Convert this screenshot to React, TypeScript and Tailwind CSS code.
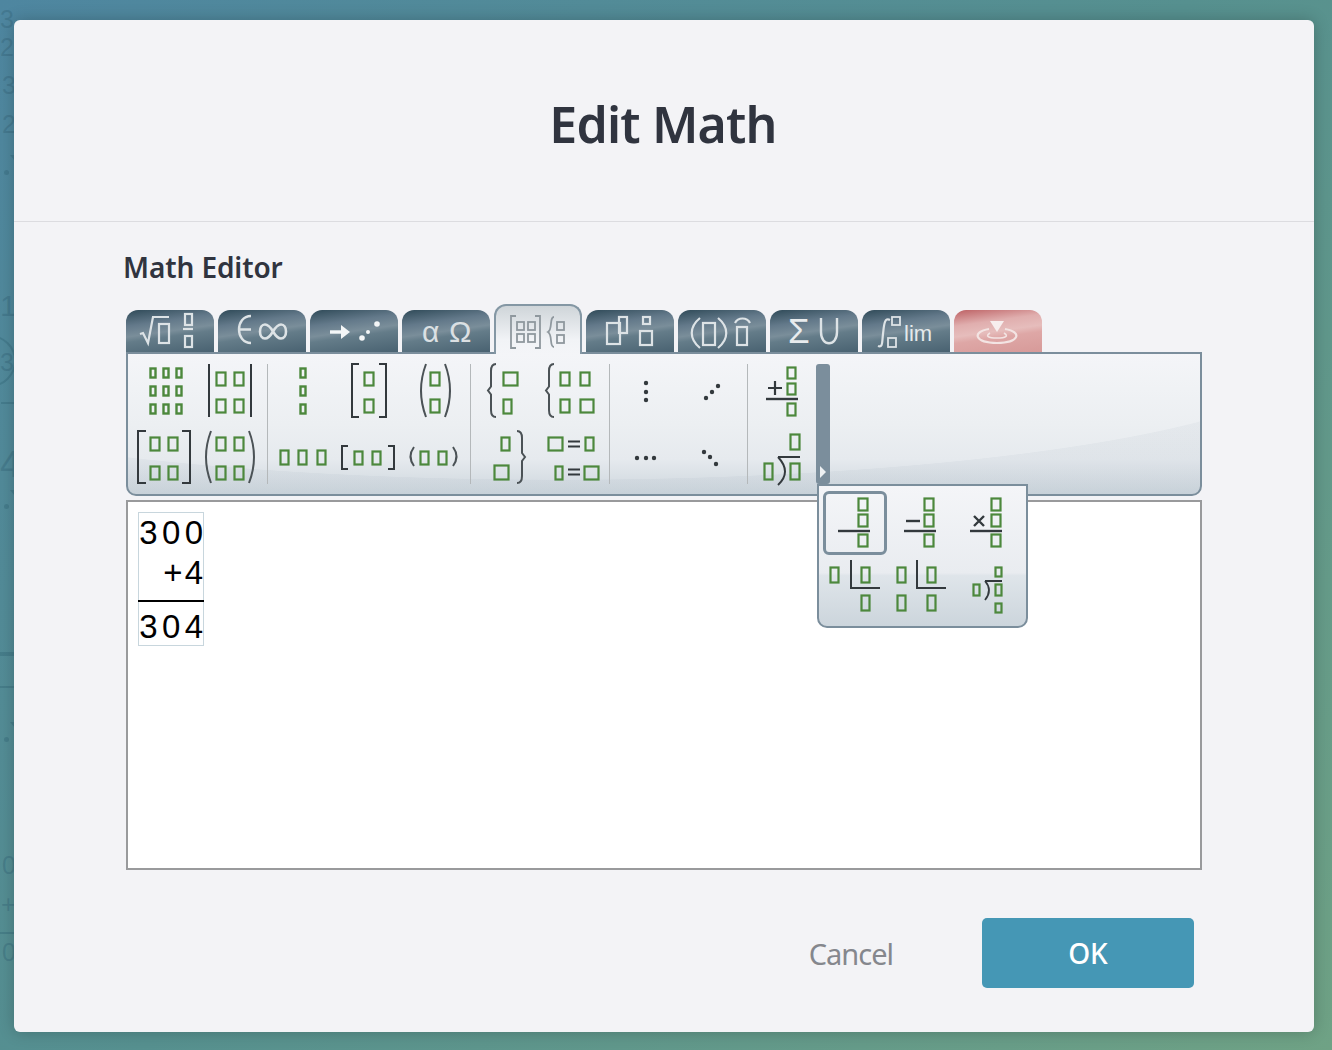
// App.tsx
import React from "react";

const GREEN = "#4c883c";
const DARK = "#33393d";

const B = ({ x, y, w, h, sw = 2.2 }: { x: number; y: number; w: number; h: number; sw?: number }) => (
  <rect x={x + 0.5} y={y + 0.5} width={w - 1} height={h - 1} fill="none" stroke={GREEN} strokeWidth={sw} />
);

const L = ({ d, sw = 2, c = DARK }: { d: string; sw?: number; c?: string }) => (
  <path d={d} fill="none" stroke={c} strokeWidth={sw} />
);

const Dots = ({ pts }: { pts: number[][] }) => (
  <>
    {pts.map((p, i) => (
      <circle key={i} cx={p[0]} cy={p[1]} r={2.2} fill={DARK} />
    ))}
  </>
);

// every cell is drawn in page coordinates through its viewBox
const Cell = ({ x, y, w = 68, children }: { x: number; y: number; w?: number; children: React.ReactNode }) => (
  <svg width={w} height="60" viewBox={`${x} ${y} ${w} 60`} className="block overflow-visible">
    {children}
  </svg>
);

const Sep = () => <div className="w-[1px] h-[120px] bg-[#b4b8ba]" />;

const Bracket = ({ l, r, t, b, s = 8 }: { l: number; r: number; t: number; b: number; s?: number }) => (
  <L d={`M${l + s} ${t}H${l}V${b}H${l + s}M${r - s} ${t}H${r}V${b}H${r - s}`} />
);

const Paren = ({ l, r, t, b, w = 8 }: { l: number; r: number; t: number; b: number; w?: number }) => (
  <L
    sw={2}
    c="#4b5256"
    d={`M${l + w} ${t}Q${l - 2} ${(t + b) / 2} ${l + w} ${b}M${r - w} ${t}Q${r + 2} ${(t + b) / 2} ${r - w} ${b}`}
  />
);

const BraceL = ({ x, t, b }: { x: number; t: number; b: number }) => {
  const m = (t + b) / 2;
  return <L sw={2} c="#4b5256" d={`M${x + 8} ${t}Q${x + 3} ${t} ${x + 3} ${t + 7}V${m - 4}L${x} ${m}L${x + 3} ${m + 4}V${b - 7}Q${x + 3} ${b} ${x + 8} ${b}`} />;
};

const BraceR = ({ x, t, b }: { x: number; t: number; b: number }) => {
  const m = (t + b) / 2;
  return <L sw={2} c="#4b5256" d={`M${x} ${t}Q${x + 5} ${t} ${x + 5} ${t + 7}V${m - 4}L${x + 8} ${m}L${x + 5} ${m + 4}V${b - 7}Q${x + 5} ${b} ${x} ${b}`} />;
};

const Eq = ({ x, y }: { x: number; y: number }) => <L sw={2.2} d={`M${x} ${y - 2.5}H${x + 12}M${x} ${y + 2.5}H${x + 12}`} />;

const TabIcon = ({ children, c }: { children: React.ReactNode; c: string }) => (
  <svg width="88" height="42" viewBox="0 0 88 42" fill="none" stroke={c} strokeWidth="2.2" className="block">
    {children}
  </svg>
);

const tabText = "font-['Liberation_Sans',sans-serif]";

const TAB_ICONS: React.ReactNode[] = [
  <>
    <path d="M14 24l3-1 5 10 5-26h16" />
    <rect x="33" y="14" width="10" height="19" />
    <rect x="59" y="4" width="7" height="11" />
    <path d="M57 19h10" />
    <rect x="59" y="26" width="7" height="11" />
  </>,
  <>
    <path d="M33 6C17 6 17 33 33 33M22 19.5h11" strokeWidth="2.4" />
    <path d="M55 21.5c-3-5-6-7-8-7-3 0-5 3-5 7s2 7 5 7c2 0 5-2 8-7s6-7 8-7c3 0 5 3 5 7s-2 7-5 7c-2 0-5-2-8-7z" strokeWidth="2.6" />
  </>,
  <>
    <path d="M20 22h13" strokeWidth="3.4" stroke="#f4f6f7" />
    <path d="M31 15l9 7-9 7z" fill="#f4f6f7" stroke="none" />
    <circle cx="52" cy="28" r="2.8" fill="#f4f6f7" stroke="none" />
    <circle cx="58" cy="22" r="2" fill="#f4f6f7" stroke="none" />
    <circle cx="67" cy="14" r="2.8" fill="#f4f6f7" stroke="none" />
  </>,
  <>
    <text x="20" y="32" fontSize="30" fill="#dbe0e3" stroke="none" className={tabText}>α</text>
    <text x="47" y="32" fontSize="30" fill="#dbe0e3" stroke="none" className={tabText}>Ω</text>
  </>,
  <>
    <path d="M22 6h-5v32h5M41 6h5v32h-5" strokeWidth="1.8" />
    <rect x="23" y="12" width="7" height="8" strokeWidth="1.8" />
    <rect x="34" y="12" width="7" height="8" strokeWidth="1.8" />
    <rect x="23" y="24" width="7" height="8" strokeWidth="1.8" />
    <rect x="34" y="24" width="7" height="8" strokeWidth="1.8" />
    <path d="M60 7c-5 0-1 12-6 15 5 3 1 15 6 15" strokeWidth="1.8" />
    <rect x="63" y="12" width="7" height="8" strokeWidth="1.8" />
    <rect x="63" y="25" width="7" height="8" strokeWidth="1.8" />
  </>,
  <>
    <rect x="21" y="13" width="13" height="21" />
    <rect x="33" y="7" width="8" height="16" />
    <rect x="57" y="7" width="7" height="7" />
    <rect x="54" y="21" width="12" height="14" />
  </>,
  <>
    <path d="M22 8c-11 9-11 21 0 30M40 8c11 9 11 21 0 30" />
    <rect x="25" y="13" width="12" height="22" />
    <path d="M57 13c3-6 12-6 15 0" />
    <rect x="59" y="17" width="10" height="18" />
  </>,
  <>
    <text x="18" y="33" fontSize="35" fill="#e8ecee" stroke="none" className={tabText}>Σ</text>
    <path d="M51 8v14c0 15 16 15 16 0V8" strokeWidth="2.4" />
  </>,
  <>
    <path d="M16 36c5 2 4-4 5-12s1-17 7-14" />
    <rect x="30" y="7" width="8" height="8" strokeWidth="1.8" />
    <rect x="26" y="28" width="8" height="9" strokeWidth="1.8" />
    <text x="42" y="31" fontSize="22" fill="#e4e9eb" stroke="none" className={tabText}>lim</text>
  </>,
  <>
    <path d="M36 11h14l-7 11z" fill="#f7eeee" stroke="none" />
    <path d="M35 19c-18 3-14 14 8 14s26-11 8-14" />
    <path d="M36 23c-5 3-2 5 7 5s12-2 7-5" strokeWidth="1.6" />
  </>,
];

const App: React.FC = () => {
  return (
    <div className="relative w-[1332px] h-[1050px] overflow-hidden pt-[20px] pl-[14px] bg-[linear-gradient(135deg,#4e86a0_0%,#56908f_50%,#6fa285_100%)] font-['Noto_Sans',sans-serif]">
      {/* faint page behind the overlay */}
      <div className="absolute left-0 top-0 w-[40px] h-[1050px] font-['Liberation_Sans',sans-serif] text-[#2f6074]/35 text-[25px] leading-none">
        <span className="absolute left-[0px] top-[7px]">3</span>
        <span className="absolute left-[0px] top-[35px]">2</span>
        <span className="absolute left-[2px] top-[73px]">3</span>
        <span className="absolute left-[2px] top-[112px]">2</span>
        <span className="absolute left-[10px] top-[155px] w-0 h-0 border-l-[5px] border-r-[5px] border-t-[6px] border-l-transparent border-r-transparent border-t-[#2f6074]/35" />
        <span className="absolute left-[4px] top-[170px] w-[5px] h-[5px] rounded-full bg-[#2f6074]/35" />
        <span className="absolute left-[0px] top-[291px] text-[30px]">1</span>
        <span className="absolute left-[-36px] top-[335px] w-[52px] h-[52px] rounded-full border-2 border-[#2f6074]/35" />
        <span className="absolute left-[0px] top-[350px]">3</span>
        <span className="absolute left-[1px] top-[402px] w-[13px] h-[2px] bg-[#2f6074]/35" />
        <span className="absolute left-[0px] top-[447px] text-[36px]">4</span>
        <span className="absolute left-[10px] top-[490px] w-0 h-0 border-l-[5px] border-r-[5px] border-t-[6px] border-l-transparent border-r-transparent border-t-[#2f6074]/35" />
        <span className="absolute left-[4px] top-[504px] w-[5px] h-[5px] rounded-full bg-[#2f6074]/35" />
        <span className="absolute left-0 top-[652px] w-[14px] h-[4px] bg-[#2f6074]/35" />
        <span className="absolute left-0 top-[686px] w-[14px] h-[2px] bg-[#2f6074]/35" />
        <span className="absolute left-[10px] top-[722px] w-0 h-0 border-l-[5px] border-r-[5px] border-t-[6px] border-l-transparent border-r-transparent border-t-[#2f6074]/35" />
        <span className="absolute left-[4px] top-[737px] w-[5px] h-[5px] rounded-full bg-[#2f6074]/35" />
        <span className="absolute left-[2px] top-[853px]">0</span>
        <span className="absolute left-[1px] top-[892px]">+</span>
        <span className="absolute left-0 top-[932px] w-[14px] h-[2px] bg-[#2f6074]/35" />
        <span className="absolute left-[2px] top-[940px]">0</span>
      </div>

      <div className="relative w-[1300px] h-[1012px] rounded-[6px] bg-[#f3f3f6] shadow-[0_0_16px_rgba(0,0,0,0.22)]">
        <div className="h-[202px] pt-[6px] flex items-center justify-center border-b border-[#dcdce0]">
          <h1 className="-ml-[2px] text-[50px] tracking-[-0.8px] leading-none font-semibold text-[#30343f]">Edit Math</h1>
        </div>

        <div className="pl-[110px] pt-[29px]">
          <div className="-ml-[1px] text-[28px] tracking-[-0.1px] leading-[32px] font-semibold text-[#30343f]">Math Editor</div>

          <div className="ml-[2px] mt-[21px] w-[1076px]">
            {/* tabs */}
            <div className="flex items-end gap-[4px] h-[48px]">
              {TAB_ICONS.map((icon, i) =>
                i === 4 ? (
                  <div
                    key={i}
                    className="relative z-10 w-[88px] h-[50px] -mb-[2px] pt-[4px] rounded-t-[12px] border-2 border-b-0 border-[#8497a4] bg-[linear-gradient(180deg,#cfd5d9_0%,#f1f3f6_70%,#f4f5f8_100%)]"
                  >
                    <div className="-ml-[2px]">
                      <TabIcon c="#8f989e">{icon}</TabIcon>
                    </div>
                  </div>
                ) : (
                  <div
                    key={i}
                    className={
                      i === 9
                        ? "w-[88px] h-[42px] rounded-t-[12px] bg-[linear-gradient(172deg,#bd6164_0%,#e0aeae_30%,#e6bdbc_50%,#dea7a6_62%,#d79a99_100%)]"
                        : "w-[88px] h-[42px] rounded-t-[12px] bg-[linear-gradient(172deg,#2f4a58_0%,#63798a_30%,#7a8e9a_50%,#647c89_60%,#496271_100%)]"
                    }
                  >
                    <TabIcon c={i === 9 ? "#f3e4e3" : "#dde3e6"}>{icon}</TabIcon>
                  </div>
                )
              )}
            </div>

            {/* tool panel */}
            <div className="relative h-[144px] rounded-b-[10px] border-2 border-[#7b8e9c] pt-[10px] pl-[2px] bg-[radial-gradient(760px_126px_at_432px_0px,transparent_99.6%,rgba(110,130,150,0.06)_100%),linear-gradient(180deg,#f4f5f8_0%,#eceff2_50%,#e6eaee_75%,#cdd6dd_100%)]">
              <div className="flex">
                <div className="grid grid-cols-[68px_68px] w-[137px]">
                  <Cell x={130} y={364}>
                    {[368, 386, 404].map((y) =>
                      [150, 163, 176].map((x) => <B key={x + "" + y} x={x} y={y} w={6} h={10} sw={2.4} />)
                    )}
                  </Cell>
                  <Cell x={198} y={364}>
                    <L d="M209 364V417M251 364V417" />
                    <B x={216} y={372} w={10} h={14} />
                    <B x={234} y={372} w={10} h={14} />
                    <B x={216} y={399} w={10} h={14} />
                    <B x={234} y={399} w={10} h={14} />
                  </Cell>
                  <Cell x={130} y={424}>
                    <Bracket l={138} r={190} t={431} b={483} />
                    <B x={150} y={437} w={10} h={14} />
                    <B x={168} y={437} w={10} h={14} />
                    <B x={150} y={466} w={10} h={14} />
                    <B x={168} y={466} w={10} h={14} />
                  </Cell>
                  <Cell x={198} y={424}>
                    <Paren l={203} r={257} t={431} b={483} />
                    <B x={216} y={437} w={10} h={14} />
                    <B x={234} y={437} w={10} h={14} />
                    <B x={216} y={466} w={10} h={14} />
                    <B x={234} y={466} w={10} h={14} />
                  </Cell>
                </div>
                <Sep />
                <div className="grid grid-cols-[68px_67px_67px] w-[202px]">
                  <Cell x={268} y={364}>
                    {[368, 386, 404].map((y) => (
                      <B key={y} x={300} y={y} w={6} h={10} sw={2.4} />
                    ))}
                  </Cell>
                  <Cell x={336} y={364} w={67}>
                    <Bracket l={352} r={386} t={364} b={417} s={7} />
                    <B x={364} y={372} w={10} h={14} />
                    <B x={364} y={399} w={10} h={14} />
                  </Cell>
                  <Cell x={403} y={364} w={67}>
                    <Paren l={418} r={453} t={364} b={417} />
                    <B x={430} y={372} w={10} h={14} />
                    <B x={430} y={399} w={10} h={14} />
                  </Cell>
                  <Cell x={268} y={424}>
                    <B x={280} y={450} w={9} h={15} />
                    <B x={298} y={450} w={9} h={15} />
                    <B x={317} y={450} w={9} h={15} />
                  </Cell>
                  <Cell x={336} y={424} w={67}>
                    <Bracket l={342} r={394} t={446} b={469} s={6} />
                    <B x={354} y={451} w={9} h={14} />
                    <B x={372} y={451} w={9} h={14} />
                  </Cell>
                  <Cell x={403} y={424} w={67}>
                    <Paren l={409} r={458} t={447} b={466} w={5} />
                    <B x={420} y={451} w={9} h={14} />
                    <B x={438} y={451} w={9} h={14} />
                  </Cell>
                </div>
                <Sep />
                <div className="grid grid-cols-[68px_68px] w-[138px]">
                  <Cell x={471} y={364}>
                    <BraceL x={488} t={364} b={417} />
                    <B x={503} y={372} w={15} h={14} />
                    <B x={503} y={399} w={9} h={15} />
                  </Cell>
                  <Cell x={539} y={364}>
                    <BraceL x={546} t={364} b={417} />
                    <B x={560} y={372} w={10} h={14} />
                    <B x={580} y={372} w={10} h={14} />
                    <B x={560} y={399} w={10} h={14} />
                    <B x={580} y={399} w={14} h={14} />
                  </Cell>
                  <Cell x={471} y={424}>
                    <B x={501} y={437} w={9} h={14} />
                    <B x={494} y={465} w={15} h={15} />
                    <BraceR x={517} t={431} b={483} />
                  </Cell>
                  <Cell x={539} y={424}>
                    <B x={548} y={437} w={15} h={14} />
                    <Eq x={568} y={444} />
                    <B x={585} y={437} w={9} h={14} />
                    <B x={555} y={466} w={8} h={14} />
                    <Eq x={568} y={472} />
                    <B x={584} y={466} w={15} h={14} />
                  </Cell>
                </div>
                <Sep />
                <div className="grid grid-cols-[68px_68px] w-[137px]">
                  <Cell x={610} y={364}>
                    <Dots pts={[[646, 383], [646, 392], [646, 400]]} />
                  </Cell>
                  <Cell x={678} y={364}>
                    <Dots pts={[[706, 398], [712, 392], [718, 386]]} />
                  </Cell>
                  <Cell x={610} y={424}>
                    <Dots pts={[[637, 458], [646, 458], [654, 458]]} />
                  </Cell>
                  <Cell x={678} y={424}>
                    <Dots pts={[[704, 452], [710, 457], [716, 464]]} />
                  </Cell>
                </div>
                <Sep />
                <div className="w-[68px]">
                  <Cell x={748} y={364}>
                    <B x={787} y={367} w={9} h={12} />
                    <B x={787} y={383} w={9} h={12} />
                    <B x={787} y={403} w={9} h={13} />
                    <L d="M766 399H798" sw={2.4} />
                    <L d="M768 388H782M775 381V395" sw={2.2} />
                  </Cell>
                  <Cell x={748} y={424}>
                    <B x={790} y={434} w={10} h={16} />
                    <B x={764} y={463} w={9} h={17} />
                    <B x={790} y={463} w={10} h={17} />
                    <L d="M778 457H800M778 457Q792 472 778 485" />
                  </Cell>
                </div>
                {/* scroll handle */}
                <div className="relative w-[14px] h-[120px] rounded-[3px] bg-[#7b8e9c]">
                  <svg width="8" height="14" viewBox="0 0 8 14" className="absolute left-[3px] bottom-[5px]">
                    <path d="M1 1l6 6-6 6z" fill="#eef1f3" />
                  </svg>
                </div>
              </div>

              {/* overflow menu */}
              <div className="absolute left-[689px] top-[130px] z-20 w-[211px] h-[144px] rounded-b-[10px] border-2 border-[#7b8e9c] bg-[linear-gradient(180deg,#f4f5f8_0%,#e9ecf0_62%,#dfe5ea_64%,#ccd5dc_100%)]">
                <div className="grid grid-cols-[68px_66px_66px] pt-[5px] pl-[2px]">
                  <Menu x={821} y={491} selected>
                    <B x={858} y={498} w={10} h={13} />
                    <B x={858} y={514} w={10} h={13} />
                    <B x={858} y={534} w={10} h={13} />
                    <L d="M838 531H870" sw={2.4} />
                  </Menu>
                  <Menu x={889} y={491}>
                    <B x={924} y={498} w={10} h={13} />
                    <B x={924} y={514} w={10} h={13} />
                    <B x={924} y={534} w={10} h={13} />
                    <L d="M906 521H920" sw={2.4} />
                    <L d="M904 531H936" sw={2.4} />
                  </Menu>
                  <Menu x={955} y={491}>
                    <B x={991} y={498} w={10} h={13} />
                    <B x={991} y={514} w={10} h={13} />
                    <B x={991} y={534} w={10} h={13} />
                    <L d="M974 516L984 526M984 516L974 526" sw={2.4} />
                    <L d="M970 531H1002" sw={2.4} />
                  </Menu>
                  <Menu x={821} y={557}>
                    <B x={830} y={567} w={9} h={16} />
                    <L d="M851 560V588H880" />
                    <B x={861} y={567} w={9} h={16} />
                    <B x={861} y={595} w={9} h={16} />
                  </Menu>
                  <Menu x={889} y={557}>
                    <B x={897} y={567} w={9} h={16} />
                    <B x={897} y={595} w={9} h={16} />
                    <L d="M917 560V588H946" />
                    <B x={927} y={567} w={9} h={16} />
                    <B x={927} y={595} w={9} h={16} />
                  </Menu>
                  <Menu x={955} y={557}>
                    <B x={995} y={567} w={7} h={10} />
                    <B x={973} y={584} w={7} h={12} />
                    <L d="M985 581H1002M985 581Q993 590 985 600" sw={1.8} />
                    <B x={995} y={584} w={7} h={12} />
                    <B x={995} y={603} w={7} h={10} />
                  </Menu>
                </div>
              </div>
            </div>

            {/* equation area */}
            <div className="mt-[4px] h-[370px] border-2 border-[#999a9c] bg-white pl-[10px] pt-[10px]">
              <div className="relative w-[66px] h-[134px] border border-[#c8d6dd] font-['Liberation_Sans',sans-serif] text-[33px] leading-none text-black text-right">
                <div className="absolute right-0 top-[3px] tracking-[4.4px] -mr-[4.4px]">300</div>
                <div className="absolute right-0 top-[43px]">
                  <span className="mr-[2px]">+</span>4
                </div>
                <div className="absolute left-[-1px] right-[-1px] top-[87px] h-[2px] bg-black" />
                <div className="absolute right-0 top-[97px] tracking-[4.4px] -mr-[4.4px]">304</div>
              </div>
            </div>
          </div>

          <div className="mt-[48px] flex items-center justify-end w-[1070px]">
            <span className="text-[29px] tracking-[-1px] leading-none text-[#85878d] mr-[89px]">Cancel</span>
            <button className="w-[212px] h-[70px] rounded-[5px] bg-[#4597b5] text-white text-[28px] leading-none font-medium">OK</button>
          </div>
        </div>
      </div>
    </div>
  );
};

const Menu = ({ x, y, selected, children }: { x: number; y: number; selected?: boolean; children: React.ReactNode }) => (
  <div className="relative w-[66px] h-[66px]">
    {selected && <div className="absolute left-[2px] top-0 w-[64px] h-[64px] rounded-[6px] border-[3px] border-[#7b8e9c]" />}
    <svg width="66" height="66" viewBox={`${x} ${y} 66 66`} className="block overflow-visible relative">
      {children}
    </svg>
  </div>
);

export default App;
